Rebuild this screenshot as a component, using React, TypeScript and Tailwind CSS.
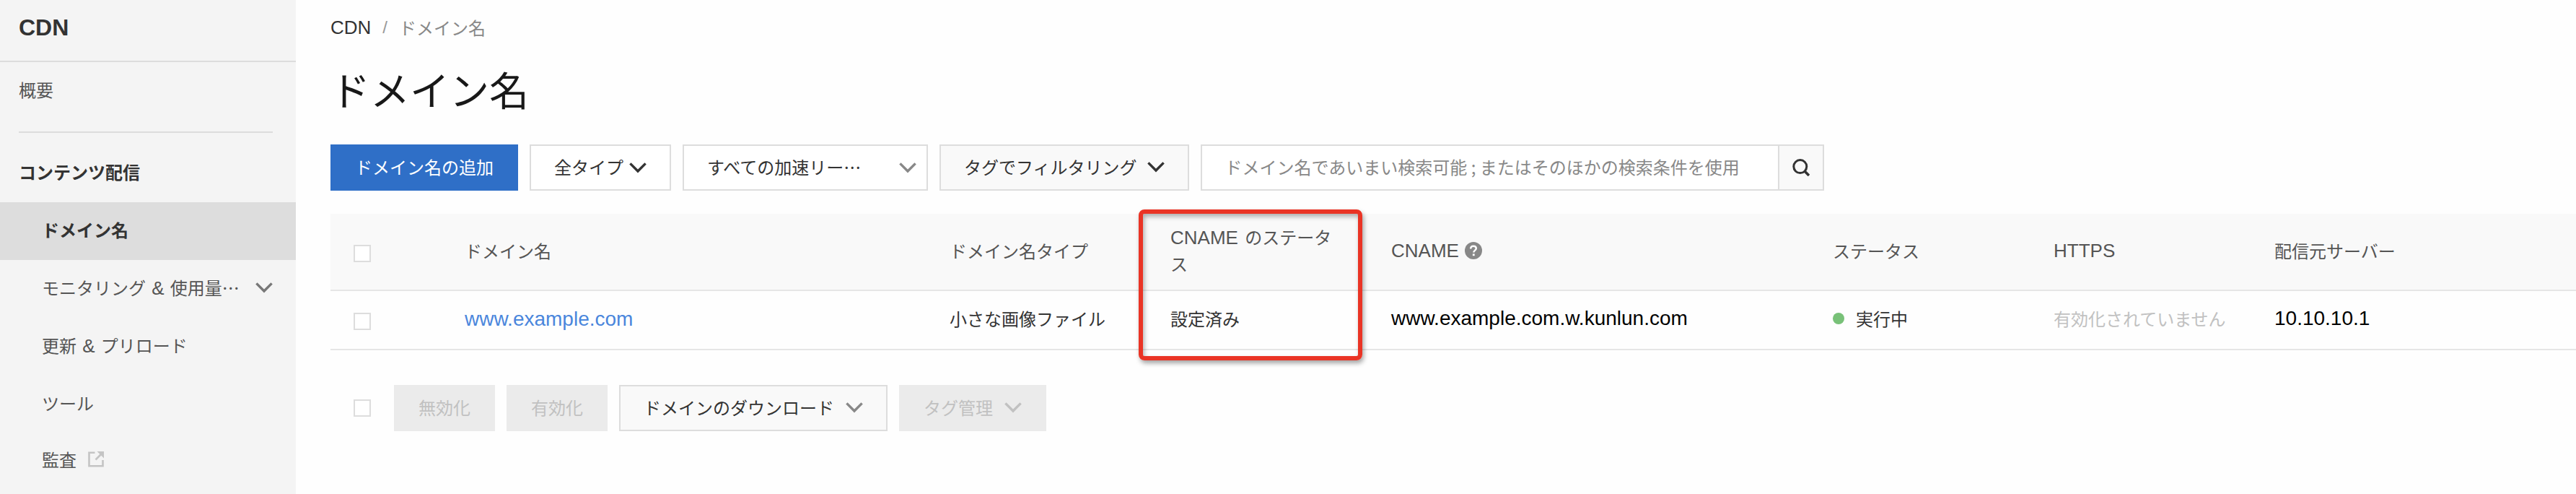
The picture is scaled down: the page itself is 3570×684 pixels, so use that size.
import React, { useState } from 'react';
import clsx from 'clsx';

const latin = "font-['Liberation_Sans',sans-serif] text-[26px]";

function Chevron({ className }: { className?: string }) {
  return (
    <svg viewBox="0 0 24 24" className={clsx('w-6 h-6 shrink-0 pointer-events-none', className)} fill="none" stroke="currentColor" strokeWidth="3.4" aria-hidden="true">
      <path d="M1.4 6.4 12 17 22.6 6.4" />
    </svg>
  );
}

function ExternalIcon() {
  return (
    <svg viewBox="0 0 22 22" className="w-[22px] h-[22px] text-[#c4c4c4]" fill="none" stroke="currentColor" strokeWidth="2.6" aria-hidden="true">
      <path d="M9.5 1.8H1.5v18.4h19V12" />
      <path d="M10.5 11.5 18 4" />
      <path d="M12.5 0H22v9.5z" fill="currentColor" stroke="none" />
    </svg>
  );
}

function SearchIcon() {
  return (
    <svg viewBox="0 0 24 24" className="w-6 h-6" fill="none" stroke="currentColor" strokeWidth="3" aria-hidden="true">
      <circle cx="10.8" cy="10.6" r="9" />
      <path d="m17 17 6 6" strokeWidth="3.6" />
    </svg>
  );
}

function HelpIcon() {
  return (
    <svg viewBox="0 0 24 24" className="w-6 h-6" aria-hidden="true">
      <circle cx="12" cy="12" r="12" fill="#888" />
      <path d="M8.2 9.4c0-2.3 1.6-3.7 3.8-3.7s3.8 1.3 3.8 3.3c0 2.6-3.5 2.7-3.5 5.6" fill="none" stroke="#fff" strokeWidth="2.5" />
      <rect x="10.9" y="16.4" width="2.8" height="2.8" fill="#fff" />
    </svg>
  );
}

interface CheckboxProps {
  label: string;
  checked: boolean;
  onChange: () => void;
  className?: string;
}

function Checkbox({ label, checked, onChange, className }: CheckboxProps) {
  return (
    <input
      type="checkbox"
      aria-label={label}
      checked={checked}
      onChange={onChange}
      className={clsx('appearance-none block w-6 h-6 border-2 border-[#ddd] bg-white checked:bg-[#2f6fc7]', className)}
    />
  );
}

function Sidebar() {
  const item = 'flex items-center h-20 pb-1 pl-[58px] pr-8';
  return (
    <aside className="w-[410px] shrink-0 bg-[#f4f4f4] text-[#555] min-h-screen">
      <div className="pt-4 pb-6 pl-[26px] border-b-2 border-[#dcdcdc] font-['Liberation_Sans',sans-serif] text-[32px] leading-[44px] font-bold text-[#333]">
        CDN
      </div>
      <nav>
        <a href="#overview" className="flex items-center h-20 pb-1 pl-[26px]">概要</a>
        <div className="mt-4 ml-[26px] mr-8 h-0.5 bg-[#dcdcdc]" />
        <h2 className="flex items-center mt-4 h-20 pb-1 pl-[26px] font-bold text-[#333]">コンテンツ配信</h2>
        <a href="#domains" aria-current="page" className={clsx(item, 'bg-[#ddd] font-bold text-[#333]')}>ドメイン名</a>
        <button type="button" className={clsx(item, 'w-full justify-between text-left whitespace-pre')}>
          <span>モニタリング<span className={clsx(latin, 'mx-px')}> &amp; </span>使用量…</span>
          <Chevron className="text-[#777]" />
        </button>
        <a href="#refresh" className={clsx(item, 'whitespace-pre')}>
          <span>更新<span className={clsx(latin, 'mx-px')}> &amp; </span>プリロード</span>
        </a>
        <a href="#tools" className={item}>ツール</a>
        <a href="#audit" className="flex items-center gap-4 h-19 pb-1 pl-[58px]">監査 <ExternalIcon /></a>
      </nav>
    </aside>
  );
}

export default function App() {
  const [selected, setSelected] = useState(false);
  const [query, setQuery] = useState('');
  const toggle = () => setSelected(s => !s);

  const th = 'px-8 pt-3.5 pb-4.5 border-b-2 border-[#e6e6e6] bg-[#f9f9f9] font-normal text-left text-[#555]';
  const td = 'px-8 pb-1 h-[82px] border-b-2 border-[#e6e6e6]';
  const button = 'flex items-center h-16 px-8 pb-0.5 border-2';
  const disabled = 'border-[#ebebeb] bg-[#ebebeb] text-[#c1c1c1]';

  return (
    <div className="flex min-h-screen bg-[#fefefe] text-[#333] text-[24px] leading-[36px] font-['Noto_Sans_CJK_JP',sans-serif]">
      <Sidebar />
      <main className="flex-1 min-w-0 pl-12">
        <nav aria-label="パンくず" className="flex items-center h-14 pt-5">
          <a href="#cdn" className={latin}>CDN</a>
          <span className="mx-4 font-['Liberation_Sans',sans-serif] text-[#999]">/</span>
          <span className="text-[#888]">ドメイン名</span>
        </nav>
        <h1 className="mt-6 text-[55px] leading-[84px] text-[#181818]">ドメイン名</h1>

        {/* Toolbar */}
        <div className="flex gap-4 mt-9">
          <button type="button" className={clsx(button, 'border-[#2f6fc7] bg-[#2f6fc7] text-white')}>ドメイン名の追加</button>
          <div className="relative flex items-center">
            <select aria-label="タイプ" className="appearance-none h-16 w-[196px] pl-8 pb-0.5 border-2 border-[#ddd] bg-white">
              <option>全タイプ</option>
            </select>
            <Chevron className="absolute right-[34px]" />
          </div>
          <div className="relative flex items-center">
            <select aria-label="加速リージョン" className="appearance-none h-16 w-[340px] pl-8 pb-0.5 border-2 border-[#ddd] bg-white">
              <option>すべての加速リー…</option>
            </select>
            <Chevron className="absolute right-4 text-[#888]" />
          </div>
          <button type="button" aria-haspopup="menu" className={clsx(button, 'gap-3.5 border-[#ddd] bg-[#f9f9f9]')}>
            タグでフィルタリング <Chevron />
          </button>
          <form className="flex w-[864px] h-16 border-2 border-[#ddd] bg-white" onSubmit={e => e.preventDefault()}>
            <input
              type="text"
              aria-label="ドメイン名の検索"
              value={query}
              onChange={e => setQuery(e.target.value)}
              placeholder="ドメイン名であいまい検索可能 ; またはそのほかの検索条件を使用"
              className="flex-1 min-w-0 pl-8 pb-0.5 placeholder:text-[#888] focus:outline-none"
            />
            <button type="submit" aria-label="検索" className="flex items-center justify-center w-[62px] border-l-2 border-[#ddd] bg-[#f9f9f9]">
              <SearchIcon />
            </button>
          </form>
        </div>

        <table className="w-full mt-8 table-fixed border-separate border-spacing-0">
          <colgroup>
            <col className="w-[154px]" />
            <col className="w-[672px]" />
            <col className="w-[306px]" />
            <col className="w-[306px]" />
            <col className="w-[612px]" />
            <col className="w-[306px]" />
            <col className="w-[306px]" />
            <col />
          </colgroup>
          <thead>
            <tr>
              <th className={th}><Checkbox label="すべて選択" checked={selected} onChange={toggle} className="mt-2" /></th>
              <th className={th}>ドメイン名</th>
              <th className={th}>ドメイン名タイプ</th>
              <th className={clsx(th, 'relative')}>
                <span className={clsx(latin, 'mr-1')}>CNAME</span> のステータ<br />ス
                {/* Highlight frame over the header and the row below */}
                <div className="absolute -left-3 -top-1.5 w-[310px] h-[209px] border-[6px] border-[#ea3425] rounded-lg pointer-events-none shadow-[2px_4px_6px_rgba(0,0,0,0.35),inset_2px_4px_6px_rgba(0,0,0,0.3)]" />
              </th>
              <th className={th}>
                <span className="flex items-center gap-2">
                  <span className={latin}>CNAME</span>
                  <HelpIcon />
                </span>
              </th>
              <th className={th}>ステータス</th>
              <th className={th}><span className={latin}>HTTPS</span></th>
              <th className={th}>配信元サーバー</th>
            </tr>
          </thead>
          <tbody>
            <tr>
              <td className={td}><Checkbox label="www.example.com を選択" checked={selected} onChange={toggle} className="mt-2" /></td>
              <td className={td}>
                <a href="#domain" className="font-['Liberation_Sans',sans-serif] text-[28px] text-[#4a86dc]">www.example.com</a>
              </td>
              <td className={td}>小さな画像ファイル</td>
              <td className={td}>設定済み</td>
              <td className={clsx(td, "font-['Liberation_Sans',sans-serif] text-[28px] text-black")}>www.example.com.w.kunlun.com</td>
              <td className={td}>
                <span className="flex items-center gap-4">
                  <span className="w-4 h-4 rounded-full bg-[#78c178]" />
                  実行中
                </span>
              </td>
              <td className={clsx(td, 'text-[#c1c1c1]')}>有効化されていません</td>
              <td className={clsx(td, "font-['Liberation_Sans',sans-serif] text-[28px] text-black")}>10.10.10.1</td>
            </tr>
          </tbody>
        </table>

        {/* Bulk actions */}
        <div className="flex items-center gap-4 mt-12 pl-8">
          <Checkbox label="表示中のドメイン名を選択" checked={selected} onChange={toggle} className="mr-4" />
          <button type="button" disabled className={clsx(button, disabled)}>無効化</button>
          <button type="button" disabled className={clsx(button, disabled)}>有効化</button>
          <button type="button" aria-haspopup="menu" className={clsx(button, 'gap-4 border-[#ddd] bg-[#f9f9f9]')}>
            ドメインのダウンロード <Chevron className="text-[#888]" />
          </button>
          <button type="button" disabled className={clsx(button, disabled, 'gap-4')}>
            タグ管理 <Chevron />
          </button>
        </div>
      </main>
    </div>
  );
}
